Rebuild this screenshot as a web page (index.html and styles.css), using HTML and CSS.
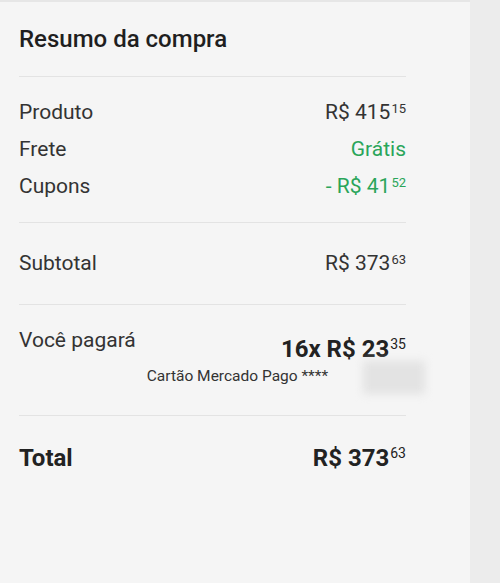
FILE: index.html
```html
<!DOCTYPE html>
<html lang="pt-BR">
<head>
<meta charset="utf-8">
<title>Resumo da compra</title>
<link rel="stylesheet" href="styles.css">
</head>
<body>
<main class="panel">
  <h2 class="title">Resumo da compra</h2>

  <section class="group items">
    <div class="row">
      <span class="label">Produto</span>
      <span class="value">R$ 415<span class="cents">15</span></span>
    </div>
    <div class="row">
      <span class="label">Frete</span>
      <span class="value green">Grátis</span>
    </div>
    <div class="row">
      <span class="label">Cupons</span>
      <span class="value green">- R$ 41<span class="cents">52</span></span>
    </div>
  </section>

  <section class="group sub">
    <div class="row">
      <span class="label">Subtotal</span>
      <span class="value">R$ 373<span class="cents">63</span></span>
    </div>
  </section>

  <section class="group pay">
    <div class="row top">
      <span class="label">Você pagará</span>
      <div class="pay-info">
        <span class="value big">16x R$ 23<span class="cents">35</span></span>
        <span class="card">Cartão Mercado Pago **** <span class="masked" aria-hidden="true"></span></span>
      </div>
    </div>
  </section>

  <section class="group total">
    <div class="row">
      <span class="label big">Total</span>
      <span class="value big">R$ 373<span class="cents">63</span></span>
    </div>
  </section>
</main>
</body>
</html>
```

FILE: styles.css
```css
* { box-sizing: border-box; }

html, body {
  margin: 0;
  padding: 0;
  height: 100%;
}

body {
  background: #ececec;
  font-family: Roboto, "Liberation Sans", Arial, sans-serif;
  color: #333333;
}

.panel {
  width: 470px;
  min-height: 583px;
  background: #f5f5f5;
  border-top: 2px solid #e6e6e6;
  padding: 0 64px 0 19px;
}

.title {
  margin: 0;
  padding: 25px 0 25px;
  font-size: 24px;
  line-height: 24px;
  font-weight: 500;
  color: #1f1f1f;
}

.group {
  border-top: 1px solid #e3e3e3;
}

.items { padding: 17px 0; }
.sub { padding: 22px 0; }
.pay { padding: 23px 0 29px; }
.total { padding: 27px 0 0; }

.row {
  display: flex;
  justify-content: space-between;
  align-items: center;
  height: 37px;
  font-size: 21px;
  line-height: 37px;
  white-space: nowrap;
}

.row.top {
  align-items: flex-start;
  height: auto;
  line-height: 24px;
}

.total .row { height: 30px; line-height: 30px; }

.label { white-space: nowrap; }
.value { white-space: nowrap; }

.green { color: #2aa55a; }

.cents {
  font-size: 13px;
  line-height: 1;
  margin-left: 1px;
  vertical-align: 6px;
}

.big {
  font-size: 24px;
  font-weight: 700;
  color: #222222;
}

.big .cents {
  font-size: 14px;
  font-weight: 400;
  vertical-align: 8px;
}

.pay-info {
  display: flex;
  flex-direction: column;
  align-items: flex-end;
}

.pay-info .big {
  line-height: 30px;
  margin-top: 6px;
}

.card {
  font-size: 15.5px;
  line-height: 20px;
  margin-top: 2px;
  white-space: nowrap;
}

.masked {
  position: relative;
  display: inline-block;
  width: 74px;
  height: 16px;
  vertical-align: middle;
}

.masked::after {
  content: "";
  position: absolute;
  left: 31px;
  top: -8px;
  width: 62px;
  height: 33px;
  background: #e3e3e3;
  filter: blur(4px);
}
```
